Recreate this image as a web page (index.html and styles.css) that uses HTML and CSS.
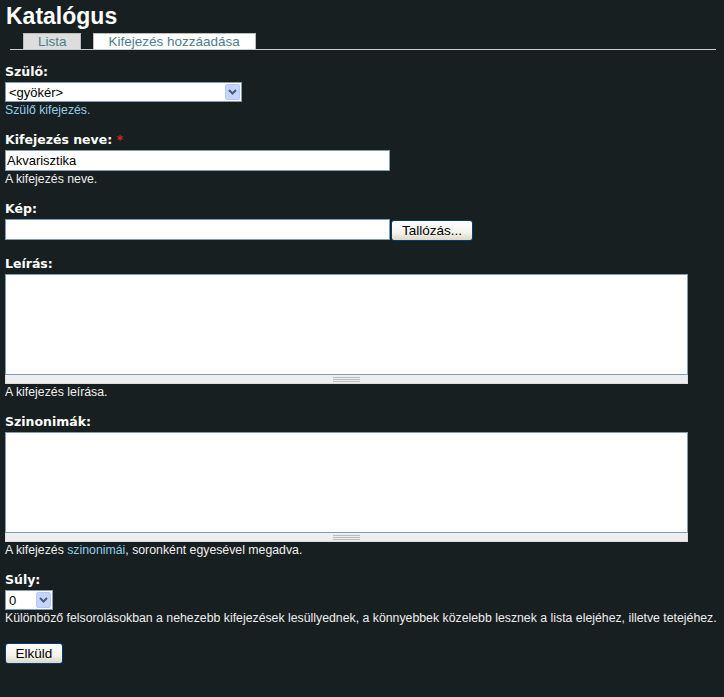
FILE: index.html
```html
<!DOCTYPE html>
<html lang="hu">
<head>
<meta charset="utf-8">
<title>Katalógus</title>
<link rel="stylesheet" href="styles.css">
</head>
<body>
<h1 class="title">Katalógus</h1>
<ul class="tabs">
  <li class="tab"><a href="#">Lista</a></li>
  <li class="tab active"><a href="#">Kifejezés hozzáadása</a></li>
</ul>
<form class="form">
  <div class="form-item">
    <label class="label">Szülő:</label>
    <span class="select-wrap select-parent">
      <select class="select"><option>&lt;gyökér&gt;</option></select>
      <span class="select-arrow"><svg width="9" height="6" viewBox="0 0 9 6"><path d="M1 1 L4.5 4.5 L8 1" fill="none" stroke="#4a5d80" stroke-width="2"/></svg></span>
    </span>
    <div class="desc desc-blue">Szülő kifejezés.</div>
  </div>
  <div class="form-item">
    <label class="label">Kifejezés neve: <span class="req">*</span></label>
    <input class="text-input" type="text" value="Akvarisztika">
    <div class="desc">A kifejezés neve.</div>
  </div>
  <div class="form-item">
    <label class="label">Kép:</label>
    <div class="file-row">
      <input class="text-input" type="text" value="">
      <button type="button" class="btn btn-browse">Tallózás...</button>
    </div>
  </div>
  <div class="form-item">
    <label class="label">Leírás:</label>
    <textarea class="textarea"></textarea>
    <div class="grippie"><span class="grip"></span></div>
    <div class="desc">A kifejezés leírása.</div>
  </div>
  <div class="form-item">
    <label class="label">Szinonimák:</label>
    <textarea class="textarea"></textarea>
    <div class="grippie"><span class="grip"></span></div>
    <div class="desc">A kifejezés <a class="link" href="#">szinonimái</a>, soronként egyesével megadva.</div>
  </div>
  <div class="form-item">
    <label class="label">Súly:</label>
    <span class="select-wrap select-weight">
      <select class="select"><option>0</option></select>
      <span class="select-arrow"><svg width="9" height="6" viewBox="0 0 9 6"><path d="M1 1 L4.5 4.5 L8 1" fill="none" stroke="#4a5d80" stroke-width="2"/></svg></span>
    </span>
    <div class="desc">Különböző felsorolásokban a nehezebb kifejezések lesüllyednek, a könnyebbek közelebb lesznek a lista elejéhez, illetve tetejéhez.</div>
  </div>
  <button type="submit" class="btn btn-submit">Elküld</button>
</form>
</body>
</html>
```
FILE: styles.css
```css
html, body {
  margin: 0;
  padding: 0;
  background: #181f21;
  color: #ffffff;
  font-family: "Liberation Sans", Arial, sans-serif;
}
body {
  padding: 0 5px;
}
.title {
  margin: 0;
  padding: 3px 0 0 1px;
  font-size: 23px;
  line-height: 26px;
  font-weight: bold;
  height: 27px;
}
.tabs {
  list-style: none;
  margin: 3px 3px 0 5px;
  padding: 0 0 0 13px;
  display: flex;
  gap: 12px;
  border-bottom: 1px solid #c8cccc;
  height: 16px;
}
.tab {
  height: 16px;
  box-sizing: border-box;
  border: 1px solid #bbbbbb;
  border-bottom: none;
  background: #dddddd;
  font-size: 13.5px;
  line-height: 16px;
  padding: 0 13px 0 14px;
}
.tab.active {
  background: #ffffff;
  padding: 0 15px 0 15px;
}
.tab a {
  color: #4f7d8b;
  text-decoration: none;
}
.form {
  margin-top: 14px;
}
.form-item {
  margin-bottom: 15px;
}
.label {
  display: block;
  font-family: "DejaVu Sans", Verdana, sans-serif;
  font-size: 12.5px;
  line-height: 16px;
  font-weight: bold;
  margin-bottom: 2px;
}
.req {
  color: #dd2222;
}
.select-wrap {
  display: block;
  position: relative;
  height: 20px;
  box-sizing: border-box;
}
.select-parent { width: 237px; }
.select-weight { width: 48px; }
.select {
  -webkit-appearance: none;
  appearance: none;
  width: 100%;
  height: 20px;
  box-sizing: border-box;
  border: 1px solid #7f9db9;
  background: #ffffff;
  font-family: "Liberation Sans", Arial, sans-serif;
  font-size: 13px;
  color: #000;
  padding: 0 0 0 3px;
  margin: 0;
  border-radius: 0;
}
.select-arrow {
  position: absolute;
  top: 2px;
  right: 2px;
  width: 15px;
  height: 16px;
  box-sizing: border-box;
  background: #c4d4fa;
  border: 1px solid #b6c9f5;
  border-radius: 2px;
  display: flex;
  align-items: center;
  justify-content: center;
  pointer-events: none;
}
.desc {
  font-size: 12.3px;
  line-height: 14px;
  margin-top: 1px;
  color: #eeeeee;
  white-space: nowrap;
}
.desc-blue, .link {
  color: #92cce6;
  text-decoration: none;
}
.text-input {
  display: block;
  width: 385px;
  height: 21px;
  box-sizing: border-box;
  border: 1px solid #7f9db9;
  background: #fff;
  font-family: "Liberation Sans", Arial, sans-serif;
  font-size: 13px;
  padding: 0 1px;
  margin: 0;
  color: #000;
}
.file-row {
  display: flex;
  align-items: flex-start;
  gap: 1px;
}
.btn {
  font-family: "Liberation Sans", Arial, sans-serif;
  font-size: 13.5px;
  color: #000;
  height: 21px;
  box-sizing: border-box;
  border: 1px solid #003c74;
  border-radius: 3px;
  background: linear-gradient(#ffffff, #f4f3ee 60%, #dcd8c6);
  padding: 0;
  margin: 0;
  line-height: 18px;
}
.btn-browse {
  width: 82px;
  margin-top: 1px;
}
.btn-submit {
  width: 58px;
  margin-top: 3px;
}
.textarea {
  display: block;
  width: 683px;
  height: 101px;
  box-sizing: border-box;
  border: 1px solid #7f9db9;
  background: #fff;
  margin: 0;
  resize: none;
  font-family: "Liberation Sans", Arial, sans-serif;
}
.grippie {
  width: 683px;
  height: 9px;
  box-sizing: border-box;
  background: #eeeeee;
  border: 1px solid #dddddd;
  border-top: none;
  display: flex;
  align-items: center;
  justify-content: center;
}
.grip {
  width: 27px;
  height: 5px;
  box-sizing: border-box;
  border-top: 1px solid #bbbbbb;
  border-bottom: 1px solid #bbbbbb;
  position: relative;
}
.grip::after {
  content: "";
  position: absolute;
  left: 0;
  right: 0;
  top: 1px;
  border-top: 1px solid #bbbbbb;
}
```
